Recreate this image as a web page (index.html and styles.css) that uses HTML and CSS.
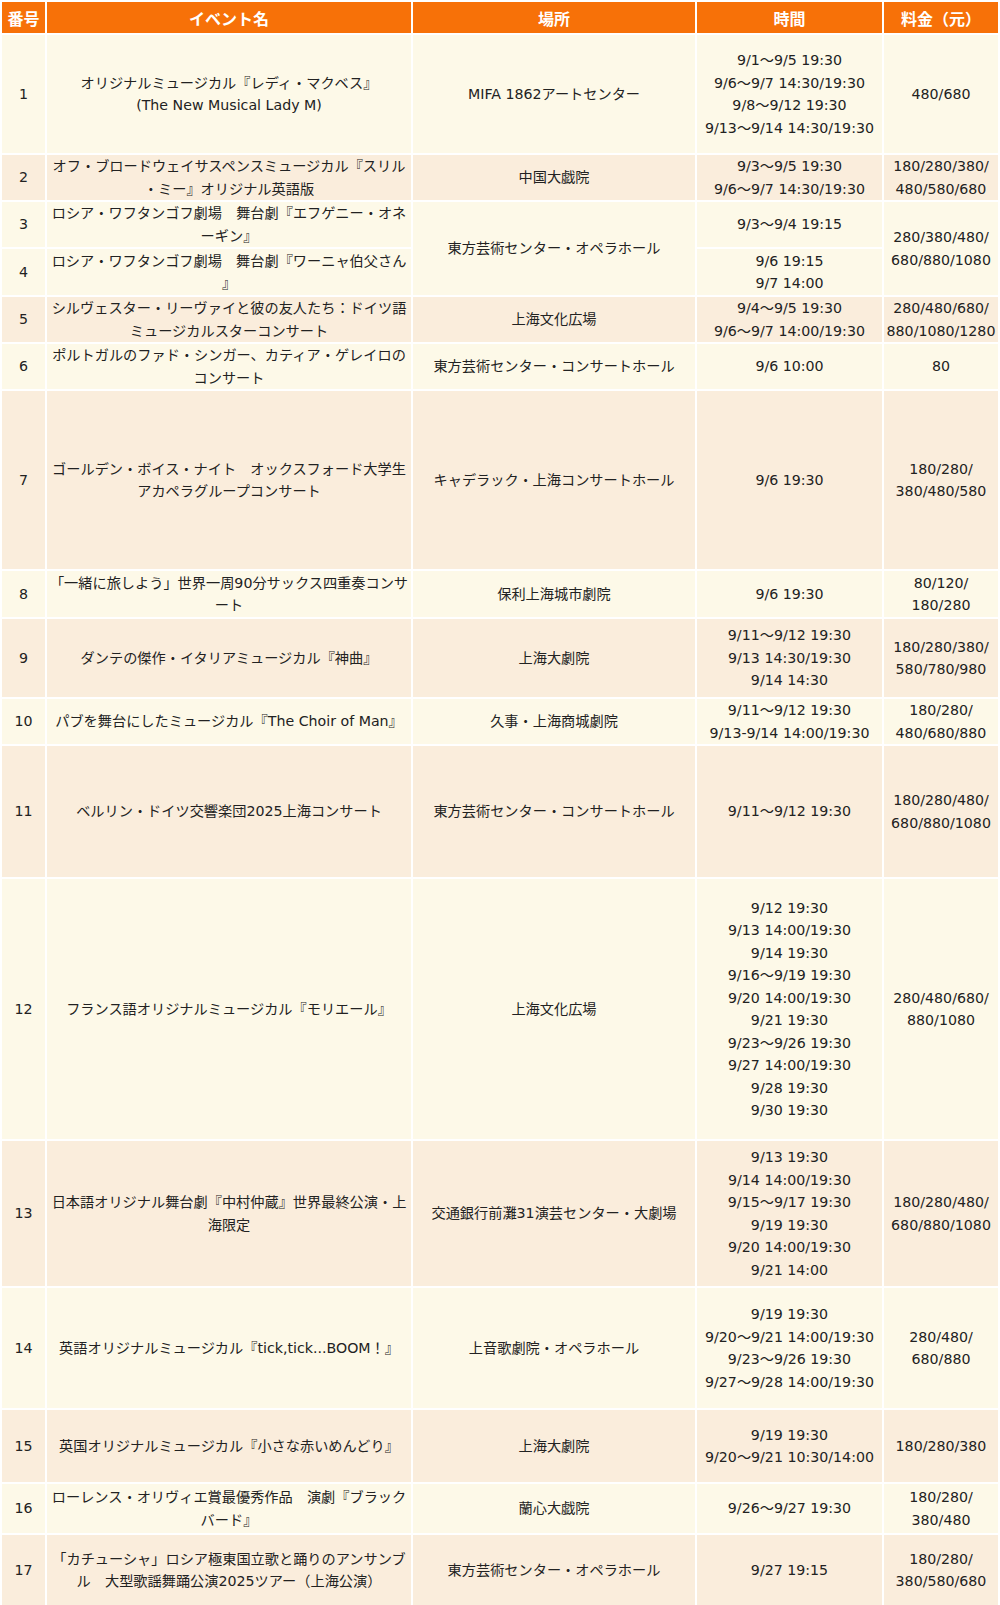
FILE: index.html
```html
<!DOCTYPE html>
<html lang="ja">
<head>
<meta charset="utf-8">
<title>イベント一覧</title>
<link rel="stylesheet" href="styles.css">
</head>
<body>
<table class="events">
  <colgroup>
    <col class="c-no">
    <col class="c-name">
    <col class="c-place">
    <col class="c-time">
    <col class="c-price">
  </colgroup>
  <thead>
    <tr class="head">
      <th>番号</th>
      <th>イベント名</th>
      <th>場所</th>
      <th>時間</th>
      <th>料金（元）</th>
    </tr>
  </thead>
  <tbody>
    <tr class="odd r1">
      <td>1</td>
      <td>オリジナルミュージカル『レディ・マクベス』<br>(The New Musical Lady M)</td>
      <td>MIFA 1862アートセンター</td>
      <td>9/1〜9/5 19:30<br>9/6〜9/7 14:30/19:30<br>9/8〜9/12 19:30<br>9/13〜9/14 14:30/19:30</td>
      <td>480/680</td>
    </tr>
    <tr class="even r2">
      <td>2</td>
      <td>オフ・ブロードウェイサスペンスミュージカル『スリル<br>・ミー』オリジナル英語版</td>
      <td>中国大戯院</td>
      <td>9/3〜9/5 19:30<br>9/6〜9/7 14:30/19:30</td>
      <td>180/280/380/<br>480/580/680</td>
    </tr>
    <tr class="odd r3">
      <td>3</td>
      <td>ロシア・ワフタンゴフ劇場　舞台劇『エフゲニー・オネ<br>ーギン』</td>
      <td rowspan="2">東方芸術センター・オペラホール</td>
      <td>9/3〜9/4 19:15</td>
      <td rowspan="2">280/380/480/<br>680/880/1080</td>
    </tr>
    <tr class="odd r4">
      <td>4</td>
      <td>ロシア・ワフタンゴフ劇場　舞台劇『ワーニャ伯父さん<br>』</td>
      <td>9/6 19:15<br>9/7 14:00</td>
    </tr>
    <tr class="even r5">
      <td>5</td>
      <td>シルヴェスター・リーヴァイと彼の友人たち：ドイツ語<br>ミュージカルスターコンサート</td>
      <td>上海文化広場</td>
      <td>9/4〜9/5 19:30<br>9/6〜9/7 14:00/19:30</td>
      <td>280/480/680/<br>880/1080/1280</td>
    </tr>
    <tr class="odd r6">
      <td>6</td>
      <td>ポルトガルのファド・シンガー、カティア・ゲレイロの<br>コンサート</td>
      <td>東方芸術センター・コンサートホール</td>
      <td>9/6 10:00</td>
      <td>80</td>
    </tr>
    <tr class="even r7">
      <td>7</td>
      <td>ゴールデン・ボイス・ナイト　オックスフォード大学生<br>アカペラグループコンサート</td>
      <td>キャデラック・上海コンサートホール</td>
      <td>9/6 19:30</td>
      <td>180/280/<br>380/480/580</td>
    </tr>
    <tr class="odd r8">
      <td>8</td>
      <td>「一緒に旅しよう」世界一周90分サックス四重奏コンサ<br>ート</td>
      <td>保利上海城市劇院</td>
      <td>9/6 19:30</td>
      <td>80/120/<br>180/280</td>
    </tr>
    <tr class="even r9">
      <td>9</td>
      <td>ダンテの傑作・イタリアミュージカル『神曲』</td>
      <td>上海大劇院</td>
      <td>9/11〜9/12 19:30<br>9/13 14:30/19:30<br>9/14 14:30</td>
      <td>180/280/380/<br>580/780/980</td>
    </tr>
    <tr class="odd r10">
      <td>10</td>
      <td>パブを舞台にしたミュージカル『The Choir of Man』</td>
      <td>久事・上海商城劇院</td>
      <td>9/11〜9/12 19:30<br>9/13-9/14 14:00/19:30</td>
      <td>180/280/<br>480/680/880</td>
    </tr>
    <tr class="even r11">
      <td>11</td>
      <td>ベルリン・ドイツ交響楽団2025上海コンサート</td>
      <td>東方芸術センター・コンサートホール</td>
      <td>9/11〜9/12 19:30</td>
      <td>180/280/480/<br>680/880/1080</td>
    </tr>
    <tr class="odd r12">
      <td>12</td>
      <td>フランス語オリジナルミュージカル『モリエール』</td>
      <td>上海文化広場</td>
      <td>9/12 19:30<br>9/13 14:00/19:30<br>9/14 19:30<br>9/16〜9/19 19:30<br>9/20 14:00/19:30<br>9/21 19:30<br>9/23〜9/26 19:30<br>9/27 14:00/19:30<br>9/28 19:30<br>9/30 19:30</td>
      <td>280/480/680/<br>880/1080</td>
    </tr>
    <tr class="even r13">
      <td>13</td>
      <td>日本語オリジナル舞台劇『中村仲蔵』世界最終公演・上<br>海限定</td>
      <td>交通銀行前灘31演芸センター・大劇場</td>
      <td>9/13 19:30<br>9/14 14:00/19:30<br>9/15〜9/17 19:30<br>9/19 19:30<br>9/20 14:00/19:30<br>9/21 14:00</td>
      <td>180/280/480/<br>680/880/1080</td>
    </tr>
    <tr class="odd r14">
      <td>14</td>
      <td>英語オリジナルミュージカル『tick,tick...BOOM！』</td>
      <td>上音歌劇院・オペラホール</td>
      <td>9/19 19:30<br>9/20〜9/21 14:00/19:30<br>9/23〜9/26 19:30<br>9/27〜9/28 14:00/19:30</td>
      <td>280/480/<br>680/880</td>
    </tr>
    <tr class="even r15">
      <td>15</td>
      <td>英国オリジナルミュージカル『小さな赤いめんどり』</td>
      <td>上海大劇院</td>
      <td>9/19 19:30<br>9/20〜9/21 10:30/14:00</td>
      <td>180/280/380</td>
    </tr>
    <tr class="odd r16">
      <td>16</td>
      <td>ローレンス・オリヴィエ賞最優秀作品　演劇『ブラック<br>バード』</td>
      <td>蘭心大戯院</td>
      <td>9/26〜9/27 19:30</td>
      <td>180/280/<br>380/480</td>
    </tr>
    <tr class="even r17">
      <td>17</td>
      <td>「カチューシャ」ロシア極東国立歌と踊りのアンサンブ<br>ル　大型歌謡舞踊公演2025ツアー（上海公演）</td>
      <td>東方芸術センター・オペラホール</td>
      <td>9/27 19:15</td>
      <td>180/280/<br>380/580/680</td>
    </tr>
  </tbody>
</table>
</body>
</html>
```
FILE: styles.css
```css
html, body {
  margin: 0;
  padding: 0;
  background: #ffffff;
}

body {
  font-family: "DejaVu Sans", "Noto Sans CJK JP", sans-serif;
  color: #222222;
}

.events {
  width: 1000px;
  table-layout: fixed;
  border-collapse: separate;
  border-spacing: 2px;
  background: #ffffff;
}

.c-no { width: 43px; }
.c-name { width: 364px; }
.c-place { width: 282px; }
.c-time { width: 185px; }
.c-price { width: 114px; }

.events th,
.events td {
  padding: 0 2px;
  text-align: center;
  vertical-align: middle;
  white-space: nowrap;
}

.events th {
  background: #f77108;
  color: #ffffff;
  font-family: "Noto Sans CJK JP", sans-serif;
  font-weight: bold;
  font-size: 16px;
  line-height: 20px;
}

.events td {
  font-size: 14.2px;
  line-height: 22.5px;
}

.head { height: 31px; }

.odd td { background: #fdf9e8; }
.even td { background: #faeddc; }

.r1 { height: 118px; }
.r2 { height: 45px; }
.r3 { height: 45px; }
.r4 { height: 46px; }
.r5 { height: 45px; }
.r6 { height: 45px; }
.r7 { height: 178px; }
.r8 { height: 46px; }
.r9 { height: 78px; }
.r10 { height: 43px; }
.r11 { height: 131px; }
.r12 { height: 260px; }
.r13 { height: 145px; }
.r14 { height: 120px; }
.r15 { height: 72px; }
.r16 { height: 49px; }
.r17 { height: 70px; }
```
